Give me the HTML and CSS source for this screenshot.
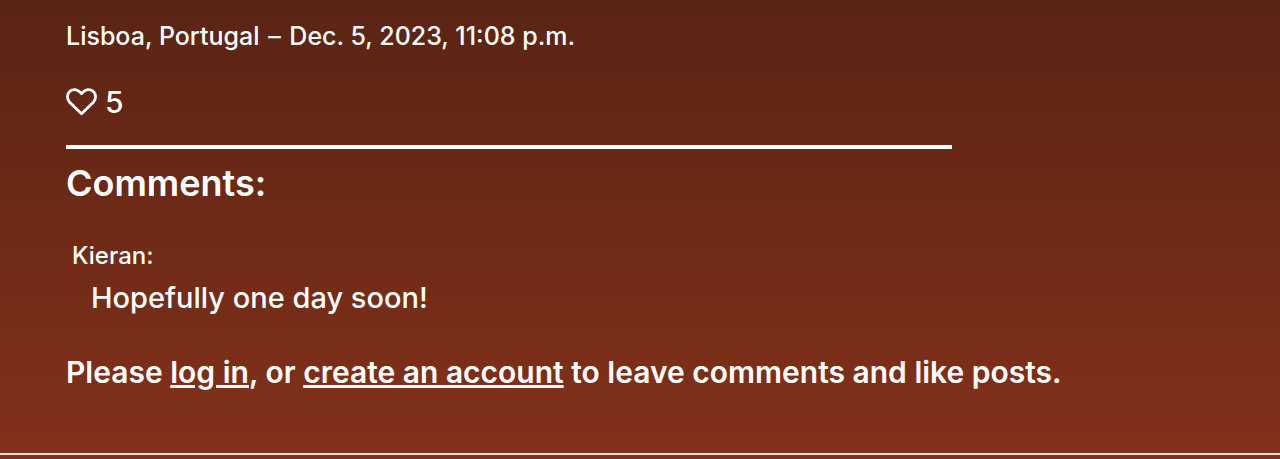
FILE: index.html
```html
<!DOCTYPE html>
<html lang="en">
<head>
<meta charset="utf-8">
<meta name="viewport" content="width=device-width, initial-scale=1">
<title>Post comments</title>
<link rel="stylesheet" href="styles.css">
</head>
<body>
<main class="post">
  <p class="meta">Lisboa, Portugal <span class="dash">–</span> Dec. 5, 2023, 11:08 p.m.</p>
  <div class="likes">
    <svg class="heart" viewBox="0 0 31 28" role="img" aria-label="Likes"><path d="M15.5 25.7 L3.6 14.2 C.6 10.9 .8 5.7 4.1 3.1 C7.3.7 11.3 1.5 13.9 4.1 L15.5 5.7 L17.1 4.1 C19.7 1.5 23.7.7 26.9 3.1 C30.2 5.7 30.4 10.9 27.4 14.2 Z"/></svg>
    <span>5</span>
  </div>
  <hr class="rule">
  <h2 class="title">Comments:</h2>
  <article class="comment">
    <p class="author">Kieran:</p>
    <p class="text">Hopefully one day soon!</p>
  </article>
  <p class="prompt">Please <a href="#login">log in</a>, or <a href="#signup">create an account</a> to leave comments and like posts.</p>
</main>
<footer class="footer"></footer>
</body>
</html>
```
FILE: styles.css
```css
* {
  box-sizing: border-box;
}

body {
  margin: 0;
  min-height: 100vh;
  display: flex;
  flex-direction: column;
  font-family: Inter, "Liberation Sans", sans-serif;
  font-weight: 500;
  color: #fff;
  background: linear-gradient(#5a2414, #83311a);
}

.post {
  flex: 1;
  padding: 20px 66px 0;
}

p,
h2 {
  margin: 0;
}

.meta {
  font-size: 25px;
  line-height: 32px;
}

.dash {
  margin: 0 2px;
}

.likes {
  display: flex;
  align-items: center;
  gap: 8px;
  margin-top: 32px;
  font-size: 30px;
  line-height: 36px;
}

.heart {
  width: 31px;
  height: 28px;
  fill: none;
  stroke: #fff;
  stroke-width: 2.8;
  stroke-linejoin: round;
}

.rule {
  width: 77.2%;
  height: 4px;
  margin: 25px 0 0;
  border: 0;
  background: #fff;
}

.title {
  margin-top: 12px;
  font-size: 36px;
  line-height: 44px;
  font-weight: 600;
}

.comment {
  margin-top: 35px;
  padding-left: 6px;
}

.author {
  font-size: 24px;
  line-height: 32px;
}

.text {
  margin-top: 8px;
  padding-left: 19px;
  font-size: 29px;
  line-height: 36px;
}

.prompt {
  margin-top: 36px;
  font-size: 30px;
  line-height: 40px;
  font-weight: 600;
}

.prompt a {
  color: inherit;
  text-decoration-thickness: 3px;
}

.footer {
  height: 6px;
  border-top: 2px solid #f3dcd5;
}
```
